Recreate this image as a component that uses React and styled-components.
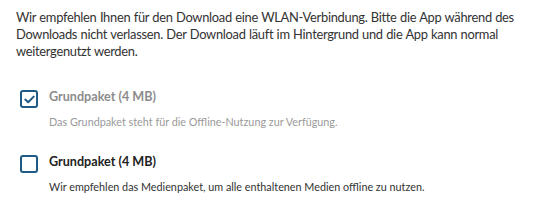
import React, { useState } from "react";
import styled, { createGlobalStyle } from "styled-components";

const GlobalStyle = createGlobalStyle`
  body {
    margin: 0;
    background: #ffffff;
    font-family: Lato, "Noto Sans", sans-serif;
  }
`;

/********** ---PAGE--- **********/
const Page = styled.div`
  width: 550px;
  height: 214px;
  padding: 9px 16px 0 16px;
  box-sizing: border-box;
  background: #ffffff;
`;

const Intro = styled.p`
  margin: 0;
  font-size: 12.9px;
  line-height: 17px;
  letter-spacing: -0.3px;
  word-spacing: 0.4px;
  color: #333333;
  white-space: nowrap;
`;

/********** ---OPTIONS--- **********/
const Options = styled.div`
  display: flex;
  flex-direction: column;
  gap: 24px;
  margin-top: 28px;
  padding-left: 4px;
`;

const Option = styled.label`
  display: grid;
  grid-template-columns: 18px 1fr;
  column-gap: 11px;
  cursor: pointer;
`;

const Box = styled.span`
  width: 18px;
  height: 18px;
  box-sizing: border-box;
  border: 2px solid #1d5a85;
  border-radius: 3px;
  background: #ffffff;
  display: flex;
  align-items: center;
  justify-content: center;
  margin-top: 2px;
`;

const Texts = styled.div`
  display: flex;
  flex-direction: column;
`;

const Title = styled.span`
  font-size: 12.6px;
  line-height: 18px;
  font-weight: 700;
  color: ${(p) => (p.$muted ? "#8c8c8c" : "#222222")};
`;

const Desc = styled.span`
  margin-top: 8px;
  font-size: 10.8px;
  line-height: 15px;
  color: ${(p) => (p.$muted ? "#9a9a9a" : "#333333")};
`;

const Check = () => (
  <svg width="11" height="9" viewBox="0 0 11 9">
    <path d="M1.3 4.6 L4.2 7.2 L9.7 1.6" fill="none" stroke="#1d5a85" strokeWidth="2" strokeLinecap="round" strokeLinejoin="round" />
  </svg>
);

function App() {
  const [pakete] = useState([
    {
      titel: "Grundpaket (4 MB)",
      text: "Das Grundpaket steht für die Offline-Nutzung zur Verfügung.",
      checked: true,
    },
    {
      titel: "Grundpaket (4 MB)",
      text: "Wir empfehlen das Medienpaket, um alle enthaltenen Medien offline zu nutzen.",
      checked: false,
    },
  ]);

  return (
    <Page>
      <GlobalStyle />
      <Intro>
        Wir empfehlen Ihnen für den Download eine WLAN-Verbindung. Bitte die App während des
        <br />
        Downloads nicht verlassen. Der Download läuft im Hintergrund und die App kann normal
        <br />
        weitergenutzt werden.
      </Intro>

      <Options>
        {pakete.map((p, i) => (
          <Option key={i}>
            <Box>{p.checked && <Check />}</Box>
            <Texts>
              <Title $muted={p.checked}>{p.titel}</Title>
              <Desc $muted={p.checked}>{p.text}</Desc>
            </Texts>
          </Option>
        ))}
      </Options>
    </Page>
  );
}

export default App;
